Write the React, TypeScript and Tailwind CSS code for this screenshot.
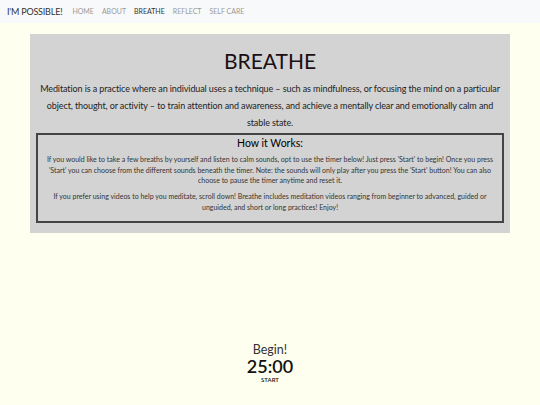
const FONT = { fontFamily: 'Lato, "Open Sans", sans-serif' }

const LINKS = ['HOME', 'ABOUT', 'BREATHE', 'REFLECT', 'SELF CARE']

export default function App() {
  return (
    <div className="min-h-[405px] bg-[#fffff0] text-[#212529]" style={FONT}>
      {/* Navbar */}
      <nav className="h-[23px] bg-[#f8f9fa] flex items-center px-[7px]">
        <span className="text-[9px] tracking-[-0.2px] text-[#333] mr-[10px]">I'M POSSIBLE!</span>
        <ul className="flex gap-[8px] text-[7px]">
          {LINKS.map((l) => (
            <li key={l} className={l === 'BREATHE' ? 'text-[#333]' : 'text-[#999]'}>
              {l}
            </li>
          ))}
        </ul>
      </nav>

      {/* Intro panel */}
      <section className="mx-[30px] mt-[11px] bg-[#d3d3d3] px-[4px] pt-[14px] pb-[10px] text-center">
        <h1 className="text-[21px] leading-[26px] text-[#1a0f14] mb-[6px]">BREATHE</h1>
        <p className="mx-[3.5px] text-[9px] tracking-[-0.1px] leading-[17px] text-[#222]">
          Meditation is a practice where an individual uses a technique – such as mindfulness, or focusing the mind on a
          particular object, thought, or activity – to train attention and awareness, and achieve a mentally clear and
          emotionally calm and stable state.
        </p>
        <div className="mt-[2px] mx-[2px] border-2 border-[#444] px-[4px] pt-0 pb-[9px]">
          <h2 className="text-[10.5px] leading-[16px] text-black mb-[3px]">How it Works:</h2>
          <p className="text-[7px] leading-[10.5px] text-[#333] mb-[5.5px]">
            If you would like to take a few breaths by yourself and listen to calm sounds, opt to use the timer below! Just
            press 'Start' to begin! Once you press 'Start' you can choose from the different sounds beneath the timer.
            Note: the sounds will only play after you press the 'Start' button! You can also choose to pause the timer
            anytime and reset it.
          </p>
          <p className="text-[7px] leading-[10.5px] text-[#333]">
            If you prefer using videos to help you meditate, scroll down! Breathe includes meditation videos ranging from
            beginner to advanced, guided or unguided, and short or long practices! Enjoy!
          </p>
        </div>
      </section>

      {/* Timer */}
      <div className="mt-[109px] flex flex-col items-center text-[#111]">
        <div className="text-[12.5px] leading-[15px] text-[#333]">Begin!</div>
        <div className="text-[18px] leading-[19px] font-semibold">25:00</div>
        <button className="text-[6px] leading-[8px] font-semibold">START</button>
      </div>
    </div>
  )
}
